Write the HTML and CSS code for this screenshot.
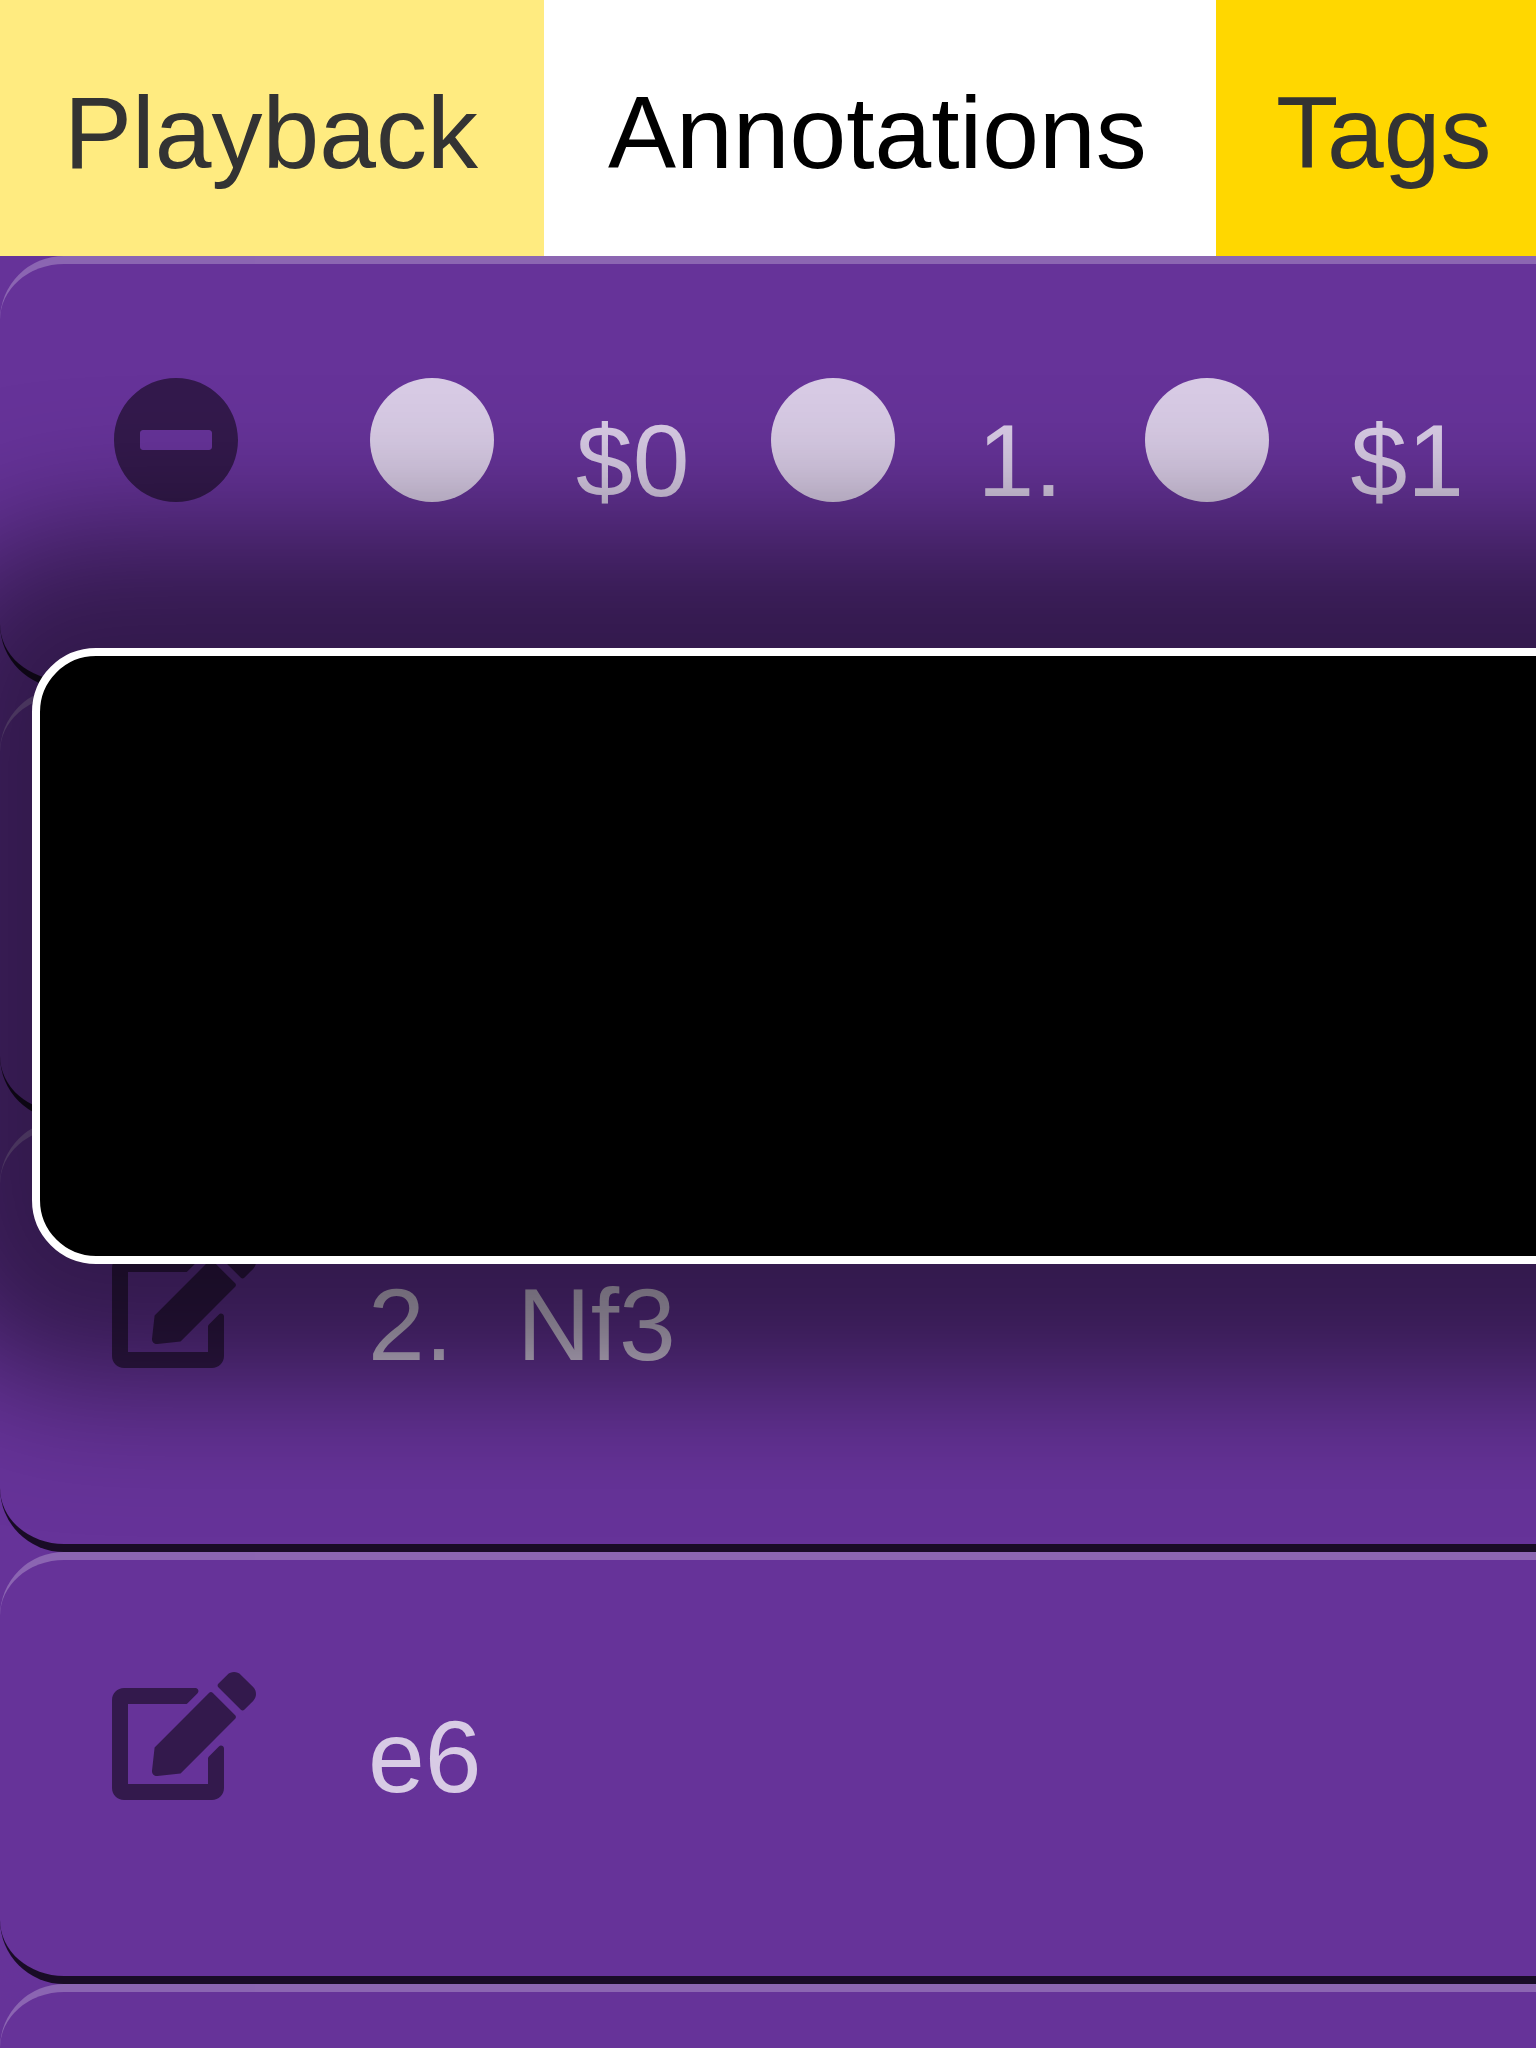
FILE: index.html
```html
<!DOCTYPE html>
<html lang="en">
<head>
<meta charset="utf-8">
<title>Annotations</title>
<link rel="stylesheet" href="styles.css">
</head>
<body>
<svg class="sprite" aria-hidden="true">
  <symbol id="edit" viewBox="0 0 576 512">
    <path d="M402.600 83.200l90.200 90.200c3.800 3.800 3.800 10 0 13.800L274.400 405.600l-92.800 10.300c-12.400 1.400-22.900-9.100-21.500-21.500l10.300-92.800L388.800 83.200c3.800-3.800 10-3.800 13.800 0zm162-22.900l-48.800-48.800c-15.200-15.200-39.900-15.200-55.200 0l-35.400 35.400c-3.800 3.800-3.800 10 0 13.800l90.200 90.200c3.800 3.800 10 3.800 13.800 0l35.400-35.400c15.200-15.300 15.200-40 0-55.200zM384 346.200V448H64V128h229.800c3.200 0 6.200-1.300 8.500-3.500l40-40c7.600-7.600 2.200-20.500-8.500-20.500H48C21.500 64 0 85.500 0 112v352c0 26.500 21.500 48 48 48h352c26.500 0 48-21.500 48-48V306.200c0-10.700-12.900-16-20.500-8.500l-40 40c-2.200 2.300-3.500 5.300-3.500 8.500z"/>
  </symbol>
  <symbol id="minus" viewBox="0 0 512 512">
    <path d="M256 8C119 8 8 119 8 256s111 248 248 248 248-111 248-248S393 8 256 8zM124 296c-6.600 0-12-5.400-12-12v-56c0-6.600 5.400-12 12-12h264c6.600 0 12 5.400 12 12v56c0 6.600-5.400 12-12 12H124z"/>
  </symbol>
</svg>
<main class="app">
  <nav class="tabs">
    <button class="tab tab-playback" type="button">Playback</button>
    <button class="tab tab-annotations" type="button" aria-current="page">Annotations</button>
    <button class="tab tab-tags" type="button">Tags</button>
  </nav>
  <ul class="moves">
    <li class="move">
      <button class="action" type="button" aria-label="Collapse"><svg class="icon icon-minus"><use href="#minus"/></svg></button>
      <div class="choices">
        <label class="choice"><input class="dot" type="radio" name="annotation">$0</label>
        <label class="choice"><input class="dot" type="radio" name="annotation">1.</label>
        <label class="choice"><input class="dot" type="radio" name="annotation">$1</label>
      </div>
    </li>
    <li class="move"></li>
    <li class="move">
      <button class="action" type="button" aria-label="Edit"><svg class="icon"><use href="#edit"/></svg></button>
      <div class="notation"><span>2.</span><span>Nf3</span></div>
    </li>
    <li class="move">
      <button class="action" type="button" aria-label="Edit"><svg class="icon"><use href="#edit"/></svg></button>
      <div class="notation"><span>e6</span></div>
    </li>
    <li class="move"></li>
  </ul>
  <div class="popup"></div>
</main>
</body>
</html>
```
FILE: styles.css
```css
* {
  box-sizing: border-box;
}

body {
  margin: 0;
  background: rebeccapurple;
  font-family: "Liberation Sans", Arial, sans-serif;
  font-size: 102px;
}

button {
  margin: 0;
  padding: 0;
  border: 0;
  background: none;
  font: inherit;
}

.sprite {
  position: absolute;
  width: 0;
  height: 0;
}

.app {
  position: relative;
  height: 100vh;
  overflow: hidden;
}

.tabs {
  display: flex;
  height: 256px;
  background: gold;
}

.tab {
  flex: none;
  padding: 10px 0 0 64px;
  color: #333;
  text-align: left;
}

.tab-playback {
  width: 544px;
  background: #ffeb80;
}

.tab-annotations {
  width: 672px;
  background: white;
  color: black;
}

.tab-tags {
  width: 336px;
  padding-left: 60px;
  background: gold;
}

.moves {
  margin: 0;
  padding: 0;
  list-style: none;
}

.move {
  display: flex;
  align-items: flex-start;
  gap: 112px;
  height: 432px;
  margin-right: -128px;
  padding: 112px 0 0 112px;
  border: solid;
  border-width: 8px 0;
  border-color: rgba(255, 255, 255, 0.25) transparent rgba(0, 0, 0, 0.75);
  border-radius: 64px;
  background: rebeccapurple;
  color: rgba(255, 255, 255, 0.75);
  line-height: 171px;
}

.action {
  flex: none;
  width: 144px;
  height: 128px;
  color: rgba(0, 0, 0, 0.5);
  line-height: 0;
  text-align: left;
}

.icon {
  display: block;
  width: 144px;
  height: 128px;
  fill: currentColor;
}

.icon-minus {
  width: 128px;
}

.choices {
  display: flex;
  gap: 80px;
}

.choice {
  display: flex;
  align-items: flex-start;
  gap: 80px;
}

.dot {
  flex: none;
  appearance: none;
  width: 124px;
  height: 124px;
  margin: 2px;
  border-radius: 50%;
  background: rgba(255, 255, 255, 0.75);
}

.notation {
  display: flex;
  gap: 64px;
}

.popup {
  position: absolute;
  top: 648px;
  right: -512px;
  left: 32px;
  height: 616px;
  border: 8px solid white;
  border-radius: 64px;
  background: black;
  box-shadow: 0 0 128px 120px rgba(0, 0, 0, 0.5);
}
```
